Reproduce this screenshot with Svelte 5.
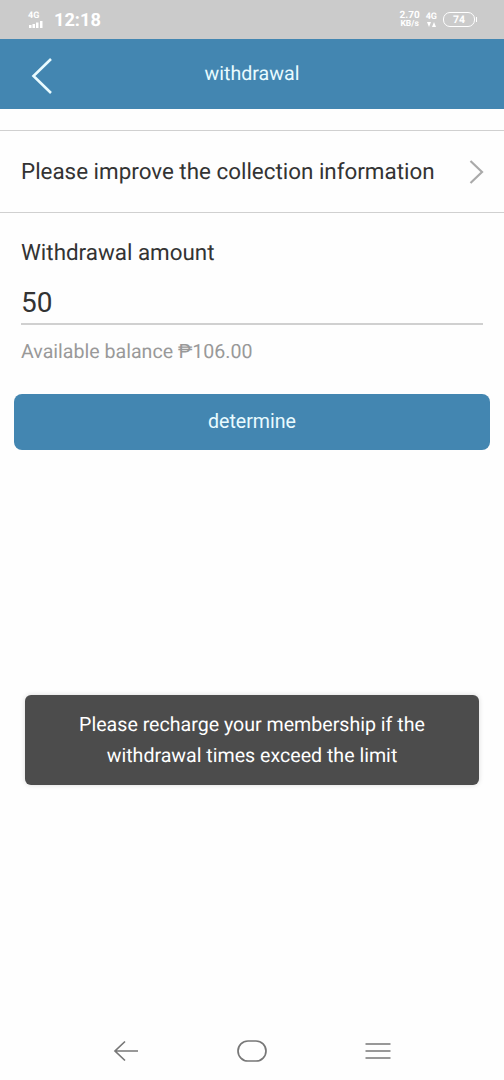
<script lang="ts">
let amount = $state("50");
const balance = "106.00";
</script>

<div class="screen">
  <div class="status">
    <div class="status-left">
      <div class="signal">
        <span>4G</span>
        <svg width="16" height="7" viewBox="0 0 16 7" fill="#fff">
          <rect x="1" y="4" width="2.5" height="3" />
          <rect x="4.5" y="3" width="2.5" height="4" />
          <rect x="8" y="1.5" width="2.5" height="5.5" />
          <rect x="12" y="0" width="2.5" height="7" />
        </svg>
      </div>
      <time>12:18</time>
    </div>
    <div class="status-right">
      <div class="speed"><span>2.70</span><span class="unit">KB/s</span></div>
      <div class="network">
        <span>4G</span>
        <svg width="9" height="5" viewBox="0 0 9 5" fill="#fff">
          <path d="M0 0h4L2 5zM5 5h4L7 0z" />
        </svg>
      </div>
      <div class="battery">74</div>
    </div>
  </div>

  <header>
    <button class="back" aria-label="back">
      <svg width="22" height="38" viewBox="0 0 22 38" fill="none" stroke="#e9fbff" stroke-width="2.6">
        <path d="M20 2 2.5 19 20 36" />
      </svg>
    </button>
    <h1>withdrawal</h1>
  </header>

  <main>
    <div class="row">
      <span>Please improve the collection information</span>
      <svg width="16" height="24" viewBox="0 0 16 24" fill="none" stroke="#aaa" stroke-width="2.2">
        <path d="M1.5 1 13 12 1.5 23" />
      </svg>
    </div>

    <section class="form">
      <label for="amount">Withdrawal amount</label>
      <input id="amount" bind:value={amount} />
      <p>Available balance <span>₱{balance}</span></p>
    </section>

    <button class="submit">determine</button>
  </main>

  <div class="toast">
    Please recharge your membership if the<br />withdrawal times exceed the limit
  </div>

  <nav>
    <svg width="26" height="22" viewBox="0 0 26 22" fill="none" stroke="#777" stroke-width="1.7">
      <path d="M12 1.5 2 11 12 20.5M2 11H25" />
    </svg>
    <svg width="30" height="22" viewBox="0 0 30 22" fill="none" stroke="#777" stroke-width="1.7">
      <rect x="1" y="1" width="28" height="20" rx="10" />
    </svg>
    <svg width="26" height="22" viewBox="0 0 26 22" fill="none" stroke="#777" stroke-width="1.7">
      <path d="M.5 4H25.5M.5 11H25.5M.5 18H25.5" />
    </svg>
  </nav>
</div>

<style>
  :global(body) {
    background: #fefefe;
  }

  .screen {
    position: relative;
    display: flex;
    flex-direction: column;
    height: 1080px;
    overflow: hidden;
    color: #333;
    font-family: Roboto, sans-serif;
    text-rendering: geometricPrecision;
  }

  svg {
    display: block;
    flex: none;
  }

  .status {
    display: flex;
    justify-content: space-between;
    box-sizing: border-box;
    height: 39px;
    padding: 0 28px;
    background: #cbcbcb;
    color: #fff;
  }

  .status-left,
  .status-right {
    display: flex;
    align-items: center;
  }

  .signal span {
    display: block;
    font-size: 9px;
    line-height: 9px;
    font-weight: 700;
  }

  time {
    margin: 2px 0 0 10px;
    font-size: 18.2px;
    font-weight: 700;
  }

  .speed,
  .network {
    display: flex;
    flex-direction: column;
    align-items: center;
    font-size: 9px;
    line-height: 9px;
    font-weight: 700;
  }

  .speed {
    font-size: 10px;
  }

  .unit {
    font-size: 8.5px;
    line-height: 8px;
  }

  .network {
    margin: 0 6px;
  }

  .battery {
    position: relative;
    box-sizing: border-box;
    width: 32px;
    height: 15px;
    margin-right: 1px;
    border: 1.5px solid #fff;
    border-radius: 7px;
    font-size: 10.5px;
    line-height: 13px;
    font-weight: 700;
    text-align: center;
  }

  .battery::after {
    content: "";
    position: absolute;
    top: 4px;
    right: -3px;
    width: 1px;
    height: 5px;
    background: #fff;
  }

  header {
    display: grid;
    grid-template-columns: 60px 1fr 60px;
    align-items: center;
    height: 70px;
    background: #4386b1;
    color: #e9fbff;
  }

  button {
    padding: 0;
    border: 0;
    background: none;
    color: inherit;
    font-family: inherit;
  }

  .back {
    margin: 3px 0 0 31px;
  }

  h1 {
    margin: 0 0 2px;
    font-size: 19.6px;
    font-weight: 400;
    text-align: center;
  }

  .row {
    display: flex;
    align-items: center;
    justify-content: space-between;
    height: 81px;
    margin-top: 21px;
    padding: 0 19px 0 21px;
    border-top: 1px solid #d0d0d0;
    border-bottom: 1px solid #d0d0d0;
    font-size: 22.4px;
  }

  .form {
    display: flex;
    flex-direction: column;
    padding: 26px 21px 0;
  }

  label {
    font-size: 22.4px;
    line-height: 28px;
  }

  input {
    height: 41px;
    margin-top: 14px;
    padding: 1px 0 0;
    border: 0;
    border-bottom: 2px solid #d0d0d0;
    outline: 0;
    background: none;
    color: #333;
    font: 28px Roboto, sans-serif;
  }

  p {
    margin: 15px 0 0;
    color: #999;
    font-size: 19.6px;
    line-height: 24px;
  }

  .submit {
    display: block;
    width: 476px;
    height: 56px;
    margin: 30px auto 0;
    padding-bottom: 2px;
    border-radius: 8px;
    background: #4386b1;
    color: #e9fbff;
    font-size: 19.6px;
  }

  .toast {
    position: absolute;
    top: 695px;
    left: 25px;
    box-sizing: border-box;
    width: 454px;
    height: 90px;
    padding: 14px 0;
    border-radius: 6px;
    background: #4c4c4c;
    box-shadow: 0 0 5px rgb(0 0 0 / 15%);
    color: #fff;
    font-size: 19.6px;
    line-height: 31px;
    text-align: center;
  }

  nav {
    display: flex;
    justify-content: space-between;
    margin-top: auto;
    padding: 0 113px 18px;
  }
</style>
